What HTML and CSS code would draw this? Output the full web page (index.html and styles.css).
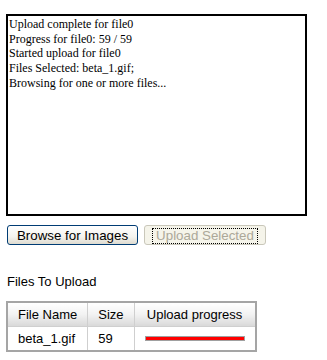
FILE: index.html
```html
<!DOCTYPE html>
<html lang="en">
<head>
    <meta charset="UTF-8">
    <title>Image Upload</title>
    <link rel="stylesheet" href="styles.css">
</head>
<body>
    <div class="log" id="log">
        <div>Upload complete for file0</div>
        <div>Progress for file0: 59 / 59</div>
        <div>Started upload for file0</div>
        <div>Files Selected: beta_1.gif;</div>
        <div>Browsing for one or more files...</div>
    </div>

    <div class="actions">
        <button type="button" class="btn">Browse for Images</button>
        <button type="button" class="btn btn-disabled" disabled><span class="focus">Upload Selected</span></button>
    </div>

    <p class="caption">Files To Upload</p>

    <table class="files">
        <thead>
            <tr>
                <th>File Name</th>
                <th>Size</th>
                <th class="progress-col">Upload progress</th>
            </tr>
        </thead>
        <tbody>
            <tr>
                <td>beta_1.gif</td>
                <td>59</td>
                <td class="progress-col"><div class="bar"><div class="fill" style="width: 100%"></div></div></td>
            </tr>
        </tbody>
    </table>
</body>
</html>
```

FILE: styles.css
```css
body {
    margin: 0;
    padding: 14px 6px;
    background: #ffffff;
    font-family: "Liberation Sans", Arial, sans-serif;
    font-size: 13px;
    color: #000000;
}

/* caja de mensajes */
.log {
    box-sizing: border-box;
    width: 301px;
    height: 202px;
    border: 2px solid #000000;
    padding: 1px 1px;
    font-family: "Liberation Serif", "Times New Roman", serif;
    font-size: 12px;
    line-height: 14.7px;
}

.actions {
    display: flex;
    gap: 6px;
    margin-top: 9px;
    padding-left: 1px;
}

.btn {
    box-sizing: border-box;
    height: 20px;
    width: 131px;
    padding: 0;
    font-family: "Liberation Sans", Arial, sans-serif;
    font-size: 13.33px;
    color: #000000;
    border: 1px solid #003c74;
    border-radius: 3px;
    background: linear-gradient(#ffffff, #f4f3ee 60%, #dedbd0);
}

.btn-disabled {
    width: 122px;
    color: #aca899;
    border-color: #c9c7ba;
    background: #f5f4ea;
}

.focus {
    display: inline-block;
    padding: 0 3px;
    line-height: 14px;
    outline: 1px dotted #000000;
}

.caption {
    margin: 29px 0 12px 1px;
    line-height: 15px;
}

/* tabla de archivos */
.files {
    border-collapse: collapse;
    border: 2px solid #a5a5a5;
}

.files th,
.files td {
    border: 1px solid #cfcfcf;
    padding: 4px 10px;
    line-height: 15px;
    text-align: left;
    font-weight: normal;
}

.files th {
    background: linear-gradient(#ffffff, #f2f2f2 50%, #d9d9d9);
}

.files .progress-col {
    width: 100px;
    text-align: center;
}

.bar {
    box-sizing: border-box;
    width: 100px;
    height: 5px;
    border: 1px solid #a0a0a0;
    background: #ffffff;
}

.fill {
    height: 100%;
    background: #ff0000;
}
```
